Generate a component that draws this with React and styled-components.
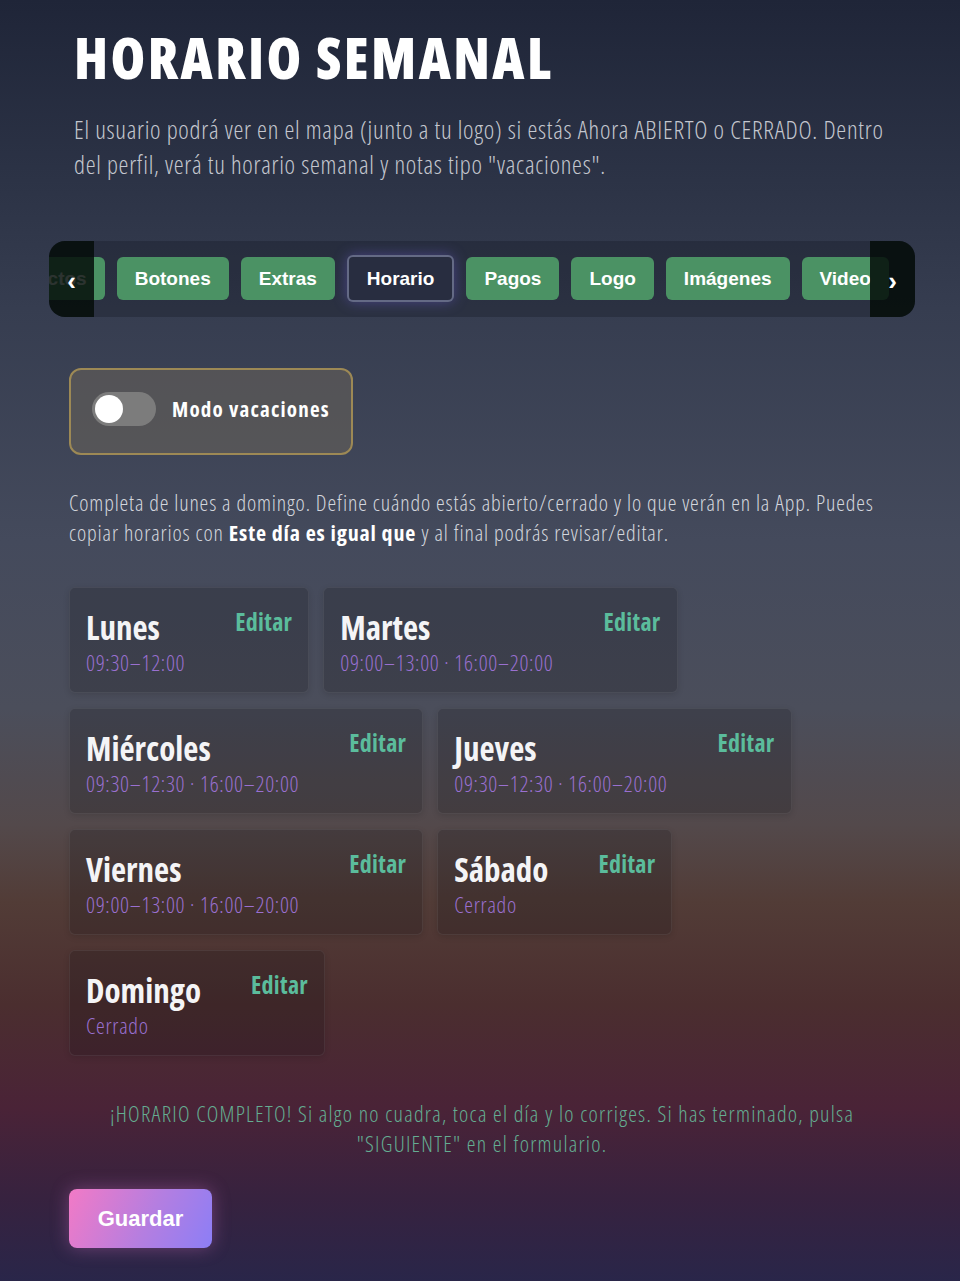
import React, { useEffect, useRef } from "react";
import styled, { createGlobalStyle, css } from "styled-components";

const soft = `"Open Sans", "Noto Sans", sans-serif`;
const arial = `"Liberation Sans", Arial, sans-serif`;

const GlobalStyle = createGlobalStyle`
  html, body { margin: 0; padding: 0; }
  body {
    min-height: 1281px;
    background: linear-gradient(180deg,
      #1f2538 0%, #2c3346 14%, #363d50 24%, #444a5c 42%, #4b4e5b 55%,
      #53494b 64%, #523c37 70%, #4b2e2f 78%, #4a2337 86%, #37223f 93%, #28264a 100%);
    font-family: ${soft};
    font-stretch: 75%;
  }
  * { box-sizing: border-box; }
`;

const Page = styled.main`
  min-height: 1281px;
  padding: 31px 65px 40px 69px;
  display: flex;
  flex-direction: column;
  align-items: flex-start;
`;

const Header = styled.header`
  padding-left: 5px;
  width: 100%;
`;

const Title = styled.h1`
  margin: 0;
  font-family: ${soft};
  font-weight: 800;
  font-stretch: 75%;
  font-size: 56px;
  line-height: 52px;
  letter-spacing: 2.4px;
  color: #ffffff;
`;

const Lead = styled.p`
  margin: 29px 0 0;
  font-weight: 300;
  font-stretch: 75%;
  font-size: 25px;
  line-height: 35px;
  letter-spacing: 0.72px;
  color: #c4c7cf;
`;

const TabBar = styled.nav`
  position: relative;
  align-self: stretch;
  margin: 59px -20px 0;
  border-radius: 16px;
  background: rgba(14, 18, 30, 0.28);
  overflow: hidden;
`;

const TabScroller = styled.div`
  position: relative;
  overflow: hidden;
  padding: 14px 0 15px;
`;

const TabTrack = styled.div`
  display: flex;
  align-items: center;
  gap: 12px;
  width: max-content;
  padding: 0 80px;
`;

const Tab = styled.button`
  flex: none;
  height: 43px;
  padding: 0 18px;
  border: none;
  border-radius: 6px;
  background: #4b9264;
  color: #ffffff;
  font-family: ${arial};
  font-stretch: 100%;
  font-weight: 700;
  font-size: 19px;
  cursor: pointer;
  ${(p) =>
    p.$active &&
    css`
      height: 47px;
      background: #282d40;
      border: 2px solid rgba(150, 156, 190, 0.55);
      box-shadow: 0 0 14px rgba(130, 110, 255, 0.35);
    `}
`;

const ArrowShade = styled.div`
  position: absolute;
  top: 0;
  bottom: 0;
  ${(p) => (p.$side === "left" ? "left: 0;" : "right: 0;")}
  width: 45px;
  display: flex;
  align-items: center;
  justify-content: center;
  padding-top: 4px;
  background: rgba(3, 12, 8, 0.84);
  color: #ffffff;
  font-family: ${arial};
  font-stretch: 100%;
  font-weight: 700;
  font-size: 26px;
`;

const VacationCard = styled.label`
  margin-top: 51px;
  display: flex;
  align-items: center;
  gap: 16px;
  padding: 22px 21px 27px;
  border: 2px solid #9d8955;
  border-radius: 12px;
  background: rgba(100, 96, 88, 0.62);
  cursor: pointer;
`;

const Switch = styled.span`
  display: flex;
  align-items: center;
  width: 64px;
  height: 34px;
  padding: 0 3px;
  border-radius: 17px;
  background: #7c7c7c;
`;

const Knob = styled.span`
  width: 28px;
  height: 28px;
  border-radius: 50%;
  background: #ffffff;
`;

const SwitchLabel = styled.span`
  font-weight: 700;
  font-stretch: 75%;
  font-size: 21px;
  line-height: 28px;
  letter-spacing: 1.2px;
  color: #ffffff;
`;

const Intro = styled.p`
  margin: 32px 0 0;
  font-weight: 300;
  font-stretch: 75%;
  font-size: 22px;
  line-height: 30px;
  letter-spacing: 0.86px;
  color: #d3d6dd;

  strong {
    font-weight: 700;
    color: #ffffff;
  }
`;

const DayGrid = styled.section`
  margin-top: 40px;
  display: flex;
  flex-wrap: wrap;
  gap: 15px 14px;
  width: 100%;
`;

const DayCard = styled.article`
  display: flex;
  align-items: flex-start;
  gap: 50px;
  padding: 21px 16px 15px;
  border: 1px solid rgba(255, 255, 255, 0.07);
  border-radius: 6px;
  background: rgba(10, 10, 16, 0.2);
  box-shadow: 0 2px 6px rgba(0, 0, 0, 0.12);
`;

const DayInfo = styled.div`
  display: flex;
  flex-direction: column;
`;

const DayName = styled.h3`
  margin: 0;
  font-weight: 700;
  font-stretch: 75%;
  font-size: 33px;
  line-height: 38px;
  color: #f4f4f6;
`;

const Hours = styled.span`
  font-weight: 300;
  font-stretch: 75%;
  font-size: 22px;
  line-height: 30px;
  letter-spacing: 0.72px;
  color: #9a70d0;
  white-space: nowrap;
`;

const EditLink = styled.button`
  margin-left: auto;
  padding: 0;
  border: none;
  background: none;
  font-family: ${soft};
  font-weight: 700;
  font-stretch: 75%;
  font-size: 24px;
  line-height: 26px;
  letter-spacing: 0.3px;
  color: #5bbc9c;
  cursor: pointer;
`;

const DoneNote = styled.p`
  margin: 42px 0 0;
  align-self: stretch;
  text-align: center;
  font-weight: 300;
  font-stretch: 75%;
  font-size: 22px;
  line-height: 30px;
  letter-spacing: 1.26px;
  color: #64ad92;
`;

const SaveButton = styled.button`
  margin-top: 31px;
  width: 143px;
  height: 59px;
  border: none;
  border-radius: 8px;
  background: linear-gradient(115deg, #f27ac6 0%, #b57ee0 55%, #8c7ef6 100%);
  box-shadow: 0 0 18px rgba(226, 120, 210, 0.35);
  color: #ffffff;
  font-family: ${arial};
  font-stretch: 100%;
  font-weight: 700;
  font-size: 22px;
  cursor: pointer;
`;

const tabs = ["Datos", "Contactos", "Botones", "Extras", "Horario", "Pagos", "Logo", "Imágenes", "Video"];

const days = [
  { name: "Lunes", hours: "09:30–12:00" },
  { name: "Martes", hours: "09:00–13:00 · 16:00–20:00" },
  { name: "Miércoles", hours: "09:30–12:30 · 16:00–20:00" },
  { name: "Jueves", hours: "09:30–12:30 · 16:00–20:00" },
  { name: "Viernes", hours: "09:00–13:00 · 16:00–20:00" },
  { name: "Sábado", hours: "Cerrado" },
  { name: "Domingo", hours: "Cerrado" },
];

export default function App() {
  const scrollerRef = useRef(null);
  const firstRef = useRef(null);

  useEffect(() => {
    if (scrollerRef.current && firstRef.current) {
      scrollerRef.current.scrollLeft = firstRef.current.offsetLeft - 68;
    }
  }, []);

  return (
    <>
      <GlobalStyle />
      <Page>
        <Header>
          <Title>HORARIO SEMANAL</Title>
          <Lead>
            El usuario podrá ver en el mapa (junto a tu logo) si estás Ahora ABIERTO o CERRADO. Dentro
            del perfil, verá tu horario semanal y notas tipo "vacaciones".
          </Lead>
        </Header>

        <TabBar>
          <TabScroller ref={scrollerRef}>
            <TabTrack>
              {tabs.map((t) => (
                <Tab key={t} $active={t === "Horario"} ref={t === "Botones" ? firstRef : undefined}>
                  {t}
                </Tab>
              ))}
            </TabTrack>
          </TabScroller>
          <ArrowShade $side="left">‹</ArrowShade>
          <ArrowShade $side="right">›</ArrowShade>
        </TabBar>

        <VacationCard>
          <Switch>
            <Knob />
          </Switch>
          <SwitchLabel>Modo vacaciones</SwitchLabel>
        </VacationCard>

        <Intro>
          Completa de lunes a domingo. Define cuándo estás abierto/cerrado y lo que verán en la App. Puedes
          copiar horarios con <strong>Este día es igual que</strong> y al final podrás revisar/editar.
        </Intro>

        <DayGrid>
          {days.map((d) => (
            <DayCard key={d.name}>
              <DayInfo>
                <DayName>{d.name}</DayName>
                <Hours>{d.hours}</Hours>
              </DayInfo>
              <EditLink>Editar</EditLink>
            </DayCard>
          ))}
        </DayGrid>

        <DoneNote>
          ¡HORARIO COMPLETO! Si algo no cuadra, toca el día y lo corriges. Si has terminado, pulsa
          "SIGUIENTE" en el formulario.
        </DoneNote>

        <SaveButton>Guardar</SaveButton>
      </Page>
    </>
  );
}
